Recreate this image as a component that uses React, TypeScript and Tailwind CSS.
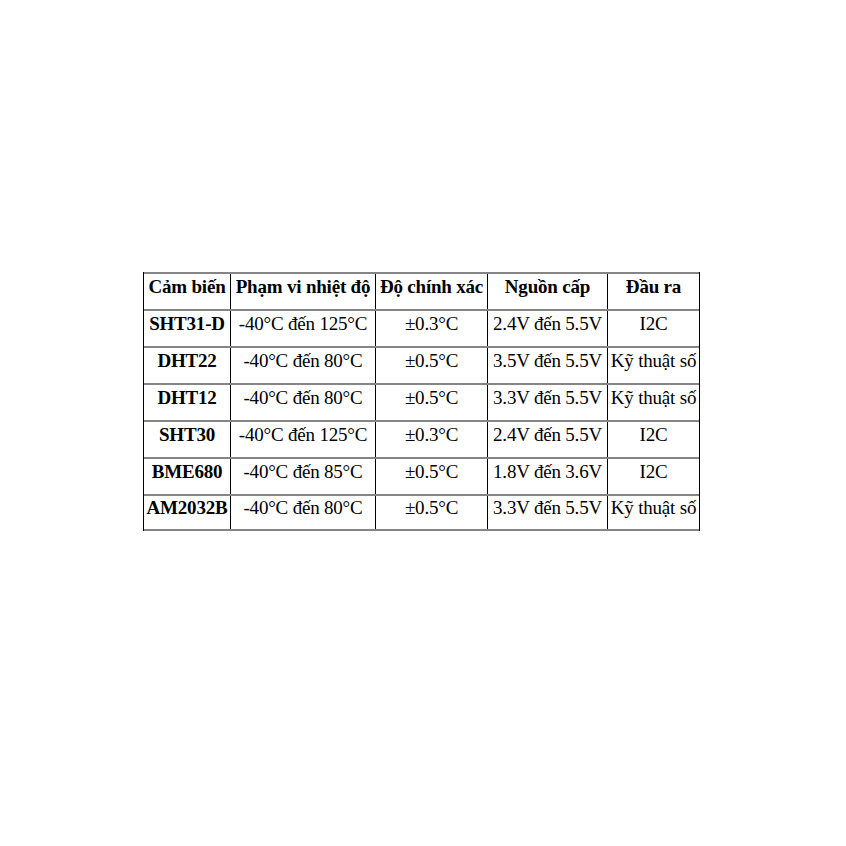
import React from "react";

const header = ["Cảm biến", "Phạm vi nhiệt độ", "Độ chính xác", "Nguồn cấp", "Đầu ra"];
const rows = [
  ["SHT31-D", "-40°C đến 125°C", "±0.3°C", "2.4V đến 5.5V", "I2C"],
  ["DHT22", "-40°C đến 80°C", "±0.5°C", "3.5V đến 5.5V", "Kỹ thuật số"],
  ["DHT12", "-40°C đến 80°C", "±0.5°C", "3.3V đến 5.5V", "Kỹ thuật số"],
  ["SHT30", "-40°C đến 125°C", "±0.3°C", "2.4V đến 5.5V", "I2C"],
  ["BME680", "-40°C đến 85°C", "±0.5°C", "1.8V đến 3.6V", "I2C"],
  ["AM2032B", "-40°C đến 80°C", "±0.5°C", "3.3V đến 5.5V", "Kỹ thuật số"],
];
const widths = ["w-[86px]", "w-[145px]", "w-[112px]", "w-[120px]", "w-[92px]"];

export default function App() {
  return (
    <div className="w-[846px] h-[846px] bg-white pt-[272px] pl-[143px] text-black" style={{ fontFamily: '"Liberation Serif", "Times New Roman", serif' }}>
      <div className="flex flex-col w-[557px] border-l border-r border-black">
        <div className="flex h-[37px] border-t-2 border-[#858585]">
          {header.map((h, i) => (
            <div key={i} className={`${widths[i]} shrink-0 flex items-center justify-center pb-[9px] font-bold text-[19px] tracking-[-0.2px] whitespace-nowrap ${i > 0 ? "border-l border-black" : ""}`}>
              {h}
            </div>
          ))}
        </div>
        {rows.map((r, ri) => (
          <div key={ri} className={`flex h-[37px] border-t-2 border-[#858585] ${ri === rows.length - 1 ? "border-b-2" : ""}`}>
            {r.map((c, i) => (
              <div key={i} className={`${widths[i]} shrink-0 flex items-center justify-center pb-[9px] text-[19px] tracking-[-0.2px] whitespace-nowrap ${i === 0 ? "font-bold" : ""} ${i > 0 ? "border-l border-black" : ""}`}>
                {c}
              </div>
            ))}
          </div>
        ))}
      </div>
    </div>
  );
}
